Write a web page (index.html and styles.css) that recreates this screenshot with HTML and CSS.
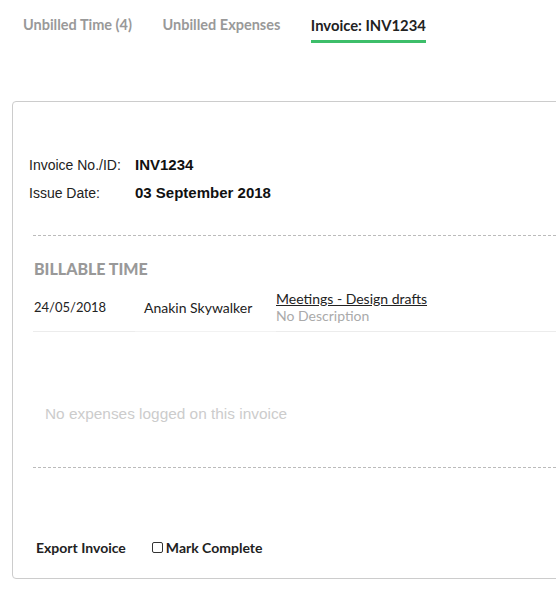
FILE: index.html
```html
<!DOCTYPE html>
<html>
<head>
<meta charset="utf-8">
<link rel="stylesheet" href="styles.css">
</head>
<body>
<nav class="tabs">
  <a class="tab">Unbilled Time (4)</a>
  <a class="tab">Unbilled Expenses</a>
  <a class="tab active">Invoice: INV1234</a>
</nav>
<section class="card">
  <div class="meta">
    <span class="meta-label">Invoice No./ID:</span><span class="meta-value">INV1234</span>
    <span class="meta-label">Issue Date:</span><span class="meta-value">03 September 2018</span>
  </div>
  <hr class="dashed">
  <h3 class="section-title">BILLABLE TIME</h3>
  <div class="row">
    <span class="cell date">24/05/2018</span>
    <span class="cell name">Anakin Skywalker</span>
    <span class="cell desc"><a class="task">Meetings - Design drafts</a><span class="sub">No Description</span></span>
  </div>
  <p class="empty">No expenses logged on this invoice</p>
  <hr class="dashed">
  <div class="actions">
    <span class="export">Export Invoice</span>
    <label class="complete"><span class="box"></span>Mark Complete</label>
  </div>
</section>
</body>
</html>
```
FILE: styles.css
```css
html, body { margin: 0; padding: 0; }
body {
  width: 556px; height: 595px; overflow: hidden;
  font-family: "Lato", "Liberation Sans", sans-serif;
  background: #fff; color: #222;
}
.tabs {
  display: flex; gap: 30.5px;
  padding: 15px 0 0 23px;
  height: 28px;
}
.tab {
  font-size: 14.5px; font-weight: 700; color: #999;
  line-height: 20px; height: 28px; box-sizing: border-box;
}
.tab.active { color: #222; border-bottom: 3px solid #3dbe6a; font-size: 14.8px; }
.card {
  margin: 58px 0 0 12px;
  width: 600px; height: 478px; box-sizing: border-box;
  border: 1px solid #ccc; border-radius: 4px;
  padding: 0 0 0 20px;
}
.meta {
  display: grid; grid-template-columns: 106px auto;
  row-gap: 10px; margin: 54px 0 0 -4px;
  font-family: "Liberation Sans", Arial, sans-serif; font-size: 14px; line-height: 18px;
}
.meta-value { font-weight: 700; color: #111; font-size: 15px; }
.dashed {
  border: 0; border-top: 1px dashed #bbb; margin: 0; height: 0;
}
.meta + .dashed { margin-top: 33px; }
.section-title {
  margin: 23px 0 0 1px; font-size: 16px; font-weight: 900; color: #999;
  line-height: 19px;
}
.row {
  display: flex; margin-top: 12px; align-items: stretch;
  font-size: 14px;
}
.cell { line-height: 17px; border-bottom: 1px solid #ececec; padding-bottom: 7px; display: flex; align-items: center; }
.date { width: 101px; padding-left: 1px; font-size: 13px; }
.name { width: 114px; padding-left: 9px; padding-right: 18px; border-bottom-color: #f2f2f2; }
.desc { flex-direction: column; align-items: flex-start; flex: 1; }
.task { color: #222; text-decoration: underline; }
.sub { color: #aaa; }
.empty {
  margin: 73px 0 0 12px; font-family: "Liberation Sans", Arial, sans-serif;
  font-size: 15.4px; color: #ccc; line-height: 18px;
}
.dashed:not(.meta + .dashed) { margin-top: 44px; }
.actions {
  display: flex; align-items: center; gap: 26px;
  margin: 71px 0 0 3px; font-size: 14px; font-weight: 700; color: #222;
}
.complete { display: flex; align-items: center; gap: 3px; }
.box {
  width: 9px; height: 9px; border: 1px solid #333; border-radius: 2px;
}
```
